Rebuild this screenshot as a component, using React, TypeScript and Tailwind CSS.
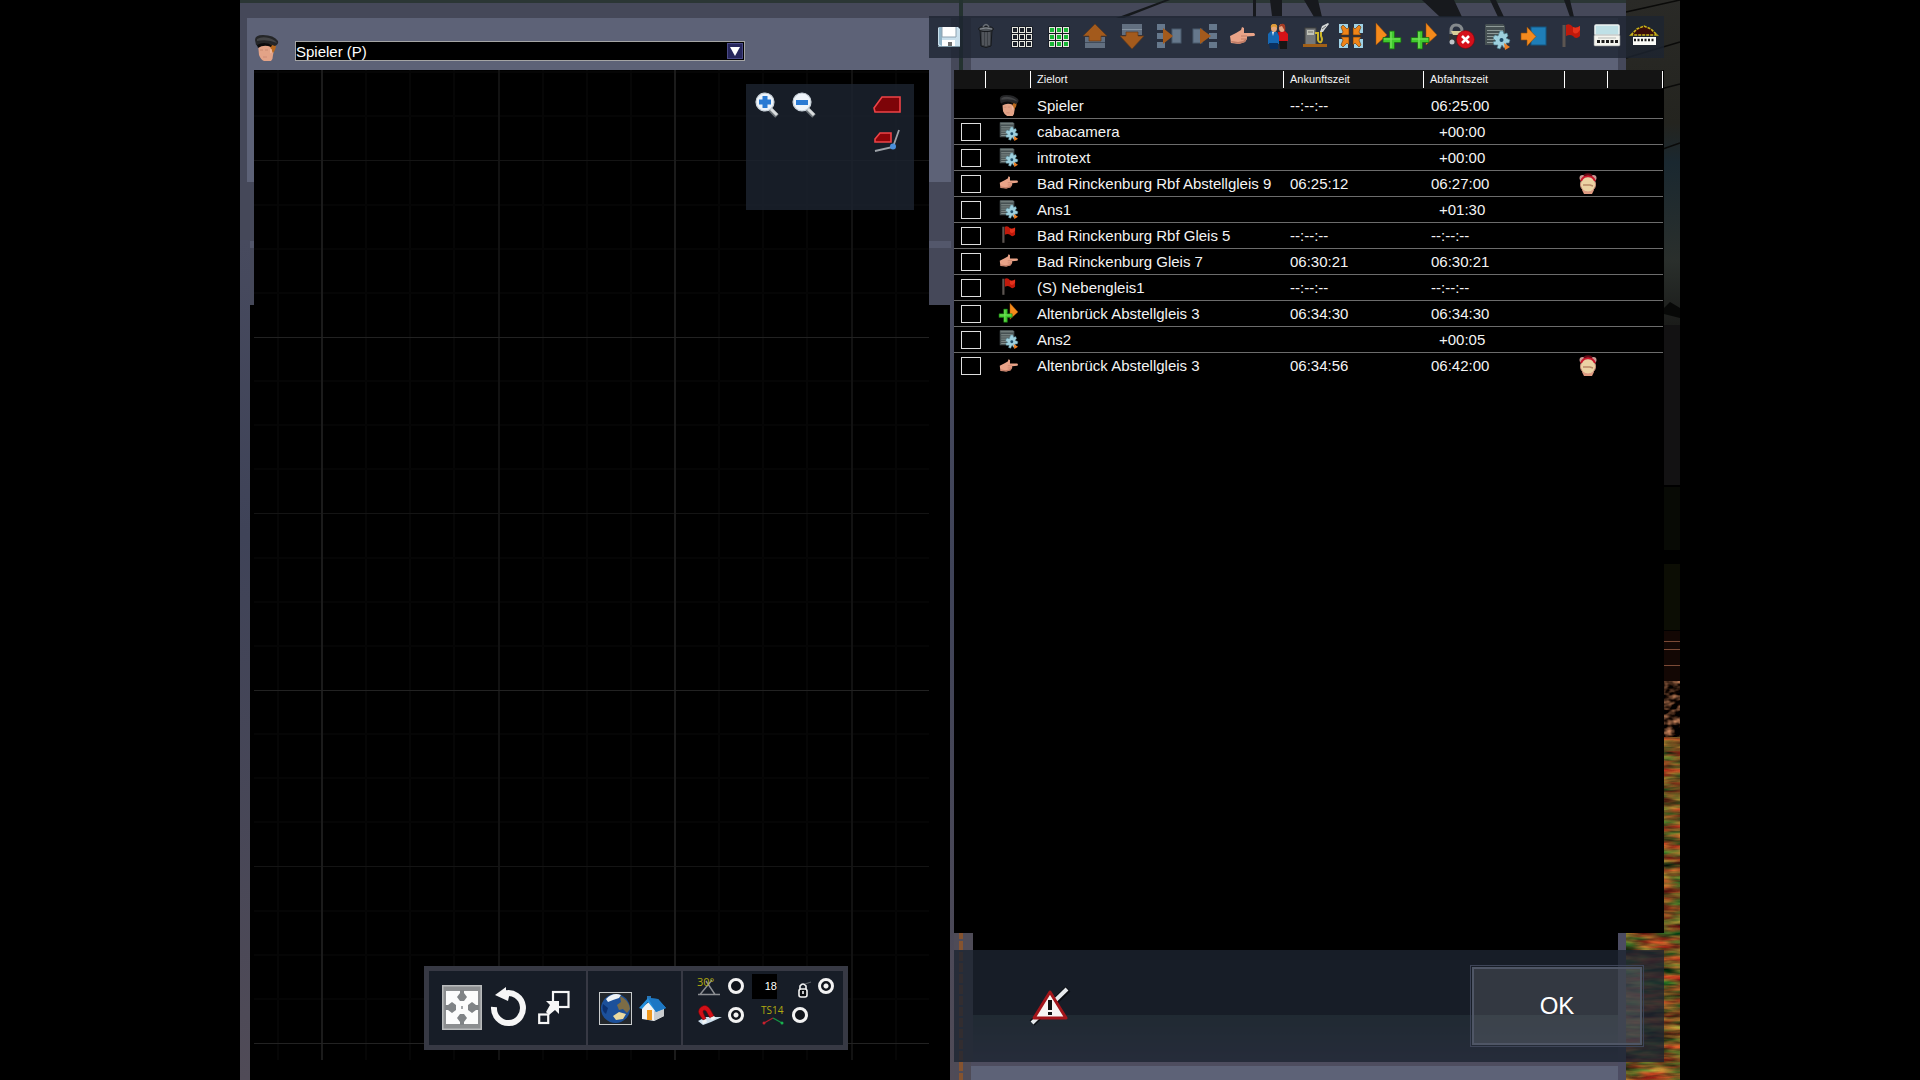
import type { ReactNode } from "react";

type IconProps = { className?: string };

function Svg({ className = "size-[26px]", children, box = "0 0 26 26" }: IconProps & { children: ReactNode; box?: string }) {
  return (
    <svg viewBox={box} className={`${className} block shrink-0 overflow-visible`} aria-hidden="true">
      {children}
    </svg>
  );
}

function DriverIcon({ className }: IconProps) {
  return (
    <Svg className={className}>
      <path d="M4 9 L5 20 Q7 25 10 26 L17 26 Q19 24 19 20 L21 10 Z" fill="#e3a387" />
      <path d="M15 9 L22 9 Q22 15 19 18 L17 14 Z" fill="#b9681c" />
      <path d="M16 14 Q18 13 18 16 Q18 19 16 18 Z" fill="#edb79d" />
      <path d="M6 15h3M11 15h3" stroke="#c98a70" />
      <path d="M9 22h4" stroke="#cf8a76" />
      <path d="M1 5 Q1 0 9 0 Q20 0 24 6 Q25 9 21 11 L18 10 Q10 7 4 11 L2 10 Z" fill="#252628" />
      <path d="M3 4 Q8 1 15 3 Q21 5 23 8 Q14 4 3 6 Z" fill="#434446" />
      <path d="M3 10 Q10 6 18 10 L17 12 Q10 9 4 13 Z" fill="#0b0b0c" />
    </Svg>
  );
}

function SaveIcon() {
  return (
    <Svg>
      <path d="M3 3H22L24 5V23H4L2 21V4Z" fill="#c9dfec" />
      <path d="M3 3H6V22L3 20Z" fill="#8fb2c6" />
      <rect x="6" y="3" width="14" height="10" fill="#fff" />
      <path d="M6 3V13H20V3" fill="none" stroke="#8ea2b0" />
      <rect x="6" y="16" width="13" height="7" fill="#fff" />
      <rect x="12" y="18" width="4" height="4" fill="#6e6e6e" />
      <path d="M2 22.500H24" stroke="#7d97a5" />
    </Svg>
  );
}

function TrashIcon() {
  return (
    <Svg>
      <path d="M7 6H19L18 22Q13 25 8 22Z" fill="#3b3f45" stroke="#15181c" />
      <path d="M10 8V21M13 8V22M16 8V21" stroke="#686d73" />
      <ellipse cx="13" cy="5" rx="7.500" ry="2.600" fill="#4c5157" stroke="#15181c" />
      <path d="M10 3Q13 -2 16 3" fill="none" stroke="#6a6f75" strokeWidth="1.500" />
      <path d="M7 5Q13 3 19 5" fill="none" stroke="#858a90" />
    </Svg>
  );
}

const gridSpots = [3, 10, 17];

function GridIcon({ fill }: { fill: string }) {
  return (
    <Svg>
      {gridSpots.map((y) =>
        gridSpots.map((x) => (
          <g key={`${x}-${y}`}>
            <rect x={x - 0.5} y={y - 0.5} width="7" height="7" fill="#0c0f14" />
            <rect x={x + 0.5} y={y + 0.5} width="5" height="5" fill={fill} stroke="#e8e8e0" />
          </g>
        )),
      )}
    </Svg>
  );
}

function MoveUpIcon() {
  return (
    <Svg>
      <rect x="3" y="13" width="20" height="11" fill="#626f80" />
      <path d="M3 18.500H23" stroke="#404b5a" />
      <path d="M13 0L25 12H19V17H7V12H1Z" fill="#a35a1c" stroke="#5f3a1c" strokeWidth=".7" />
    </Svg>
  );
}

function MoveDownIcon() {
  return (
    <Svg>
      <rect x="3" y="0" width="20" height="11" fill="#626f80" />
      <path d="M3 5.500H23" stroke="#8592a0" />
      <path d="M13 25L25 12H19V8H7V12H1Z" fill="#a35a1c" stroke="#5f3a1c" strokeWidth=".7" />
    </Svg>
  );
}

function CoupleIcon() {
  return (
    <Svg>
      <path d="M1 0H9V6H1ZM1 9H9V15H1ZM1 18H9V24H1Z" fill="#66788c" />
      <rect x="16" y="5" width="9" height="14" fill="#66788c" stroke="#4a5a6d" />
      <path d="M7 4L17 12L7 20Z" fill="#a35a1c" />
    </Svg>
  );
}

function UncoupleIcon() {
  return (
    <Svg>
      <rect x="1" y="5" width="9" height="14" fill="#66788c" stroke="#4a5a6d" />
      <path d="M17 0H25V6H17ZM17 9H25V15H17ZM17 18H25V24H17Z" fill="#66788c" />
      <path d="M8 4L19 12L8 20Z" fill="#a35a1c" />
    </Svg>
  );
}

function HandIcon({ className }: IconProps) {
  return (
    <Svg className={className}>
      <path d="M1 12L7 9L12 6L13 3L15 4L15 9L25 9Q27 11 25 12L18 12.500V15L16 18L10 20L2 19Z" fill="#e9a388" />
      <path d="M1 18L10 20L16 18L18 14L14 17L9 18L3 17Z" fill="#c07c66" />
      <path d="M12 12H18M12 15H17" stroke="#b87360" strokeWidth=".8" />
    </Svg>
  );
}

function PassengersIcon() {
  return (
    <Svg>
      <path d="M13 8L20 7L23 10V17H14Z" fill="#d51218" />
      <path d="M14 17H22V25H15Z" fill="#161616" />
      <ellipse cx="17" cy="4" rx="3" ry="4" fill="#e5a483" />
      <path d="M14 3Q15 -1 19 0Q21 2 20 7Q18 4 17 2Z" fill="#a33a22" />
      <path d="M3 10L6 7L12 8L14 12V20H3Z" fill="#1668b4" />
      <path d="M4 19H13V25H5Z" fill="#0b2f5d" />
      <path d="M7 8L8 12L9 8Z" fill="#e9eef5" />
      <ellipse cx="9" cy="4" rx="3" ry="4" fill="#e9a97b" />
      <path d="M6 4Q5 0 9 0Q13 0 12 4Q9 1 6 4Z" fill="#dc9a35" />
    </Svg>
  );
}

function FuelIcon() {
  return (
    <Svg>
      <rect x="3" y="4" width="11" height="17" fill="#75787a" stroke="#3e3e3c" />
      <rect x="5" y="6" width="7" height="5" fill="#c0c2b8" />
      <path d="M6 8H11" stroke="#6e6f68" />
      <rect x="1" y="20" width="24" height="3" fill="#a05f18" />
      <path d="M13 9H16V16Q17 19 19 18Q21 16 19 12L19 7" fill="none" stroke="#cdb528" strokeWidth="2" />
      <path d="M18 8L20 2L26 -1L27 0L23 5L21 8Z" fill="#d5d8d8" />
      <path d="M20 5L24 2" stroke="#6c6f70" />
    </Svg>
  );
}

function GatherIcon() {
  return (
    <Svg>
      <path d="M1 0H10V9H1ZM16 0H25V9H16ZM1 15H10V24H1ZM16 15H25V24H16Z" fill="#9fd2e6" />
      <g fill="#ef8418" stroke="#5c3208" strokeWidth=".6">
        <path d="M3 3L5 1L9 5L11 3V11H3L5 8Z" />
        <path d="M23 3L21 1L17 5L15 3V11H23L21 8Z" />
        <path d="M3 21L5 23L9 19L11 21V13H3L5 16Z" />
        <path d="M23 21L21 23L17 19L15 21V13H23L21 16Z" />
      </g>
    </Svg>
  );
}

function Plus({ x, y }: { x: number; y: number }) {
  return (
    <g transform={`translate(${x} ${y})`}>
      <path d="M-2.500 -9H2.500V-2.500H9V2.500H2.500V9H-2.500V2.500H-9V-2.500H-2.500Z" fill="#3fc92d" stroke="#1c6b14" strokeWidth=".8" />
      <path d="M-1 -8V8M-8 -1H8" stroke="#7be560" strokeWidth="1.200" />
    </g>
  );
}

function InsertAfterIcon() {
  return (
    <Svg>
      <path d="M1 -1L12 11L1 21Z" fill="#f58a1b" stroke="#9a4b06" strokeWidth=".5" />
      <Plus x={17} y={16} />
    </Svg>
  );
}

function InsertBeforeIcon({ className }: IconProps) {
  return (
    <Svg className={className}>
      <path d="M15 -1L26 11L15 21Z" fill="#f58a1b" stroke="#9a4b06" strokeWidth=".5" />
      <Plus x={9} y={16} />
    </Svg>
  );
}

function LockDeleteIcon() {
  return (
    <Svg>
      <path d="M3 10V7Q3 1 8 1Q14 1 14 7V10" fill="none" stroke="#84898c" strokeWidth="3" />
      <path d="M1 11H15V16Q14 20 9 20H5Q1 19 1 15Z" fill="#2f3236" />
      <path d="M3 7H14L12 11H5Z" fill="#d9cf9a" />
      <circle cx="4" cy="18" r="2.500" fill="#bfc4c8" />
      <circle cx="17.500" cy="15.500" r="9" fill="#d5101b" stroke="#7b060c" strokeWidth=".6" />
      <path d="M14 12L21 19M21 12L14 19" stroke="#fff" strokeWidth="2.600" />
    </Svg>
  );
}

function ScriptIcon({ className }: IconProps) {
  return (
    <Svg className={className}>
      <path d="M2 0H19L21 2V21H1V1Z" fill="#465052" />
      <path d="M2 2.500H20M3 6.500H19M3 9.500H17M3 12.500H13M3 15.500H11M3 18.500H11" stroke="#8e9a98" strokeWidth="1.200" />
      <path d="M16 7H19L20 10L23 9L24 12L22 14L26 16L25 19L22 19L23 22L20 24L18 21L16 25L13 24L14 21L10 21L9 18L12 17L9 14L11 11L14 12Z" fill="#9dd0de" stroke="#4e7d8d" strokeWidth=".6" />
      <circle cx="17.500" cy="16" r="2" fill="#1d4a66" />
      <path d="M20 19L26 23L21 26Z" fill="#ef7f22" />
    </Svg>
  );
}

function EnterIcon() {
  return (
    <Svg>
      <rect x="10" y="3" width="15" height="18" fill="#1f7eb8" stroke="#145682" />
      <path d="M0 9H6V3L15 12.500L6 22V16H0Z" fill="#f48a1e" stroke="#8c4a0b" strokeWidth=".6" />
    </Svg>
  );
}

function FlagIcon({ className }: IconProps) {
  return (
    <Svg className={className}>
      <path d="M6 1V23" stroke="#5c5551" strokeWidth="3" />
      <path d="M8 1Q12 -1 15 3Q18 5 22 2V12Q18 16 15 12Q12 10 8 12Z" fill="#c0190b" />
      <path d="M15 3Q18 5 22 2V6Q18 12 15 8Z" fill="#e5321c" />
    </Svg>
  );
}

function PlatformIcon() {
  return (
    <Svg>
      <rect x="1" y="1" width="24" height="10" rx="1" fill="#bfe0e6" stroke="#eef3f3" strokeWidth="1.500" />
      <rect x="0" y="11" width="26" height="11" rx="1" fill="#f4f4ee" stroke="#8b8e90" strokeWidth=".6" />
      <path d="M3 17.500H24" stroke="#1b1b1b" strokeWidth="3" strokeDasharray="3 1.500" />
      <path d="M4 14H22" stroke="#b6b9b6" />
    </Svg>
  );
}

function DepotIcon() {
  return (
    <Svg>
      <path d="M0 11L6 5L13 2L20 5L26 11Z" fill="#3a0d08" stroke="#c9b218" strokeWidth="1.600" strokeDasharray="3 1" />
      <rect x="2" y="13" width="23" height="8" fill="#fbfbf6" />
      <path d="M3 16H24" stroke="#1b1b1b" strokeWidth="2.500" strokeDasharray="2 1.500" />
    </Svg>
  );
}

function ClockIcon() {
  return (
    <Svg className="size-[20px]" box="0 0 20 20">
      <circle cx="4.500" cy="4" r="3" fill="#c99a94" />
      <circle cx="15.500" cy="4" r="3" fill="#c99a94" />
      <path d="M4 16L6 20H14L16 16Z" fill="#e09a80" />
      <circle cx="10" cy="10.500" r="7.500" fill="#ecd3a4" stroke="#d99a85" />
      <path d="M3 7Q5 2 10 2Q15 2 17 7" fill="none" stroke="#c8162a" strokeWidth="2" />
      <path d="M6 1.500Q10 -1 14 1.500" fill="none" stroke="#5f0814" strokeWidth="2" />
      <path d="M5 11H12L15 12" fill="none" stroke="#b88a68" strokeWidth="1.600" />
    </Svg>
  );
}

function MagnifierIcon({ minus = false }: { minus?: boolean }) {
  return (
    <Svg>
      <path d="M16 17L23 24" stroke="#6d7479" strokeWidth="5" />
      <path d="M17 17L23 23" stroke="#d9dcde" strokeWidth="3" />
      <circle cx="11" cy="10" r="9" fill="#eef4fa" stroke="#c9d2da" strokeWidth="1.200" />
      <path d={minus ? "M5 8H17V13H5Z" : "M8.500 4H13.500V7.500H17V12.500H13.500V16H8.500V12.500H5V7.500H8.500Z"} fill="#2a7ad3" />
    </Svg>
  );
}

function TrainIcon() {
  return (
    <Svg className="h-[17px] w-[28px]" box="0 0 28 17">
      <path d="M1 12L9 1H27V16H2Z" fill="#7d0408" stroke="#ee4347" strokeWidth="1.600" />
    </Svg>
  );
}

function TrainTrackIcon() {
  return (
    <Svg>
      <path d="M1 10L6 4H17V13H1Z" fill="#8d0408" stroke="#ee4347" strokeWidth="1.600" />
      <path d="M1 22L19 18L25 1" fill="none" stroke="#9da2a8" strokeWidth="1.800" />
      <circle cx="19" cy="17.500" r="3" fill="#4b8fdb" />
    </Svg>
  );
}

function MoveIcon() {
  return (
    <Svg className="h-[45px] w-[40px]" box="0 0 40 45">
      <rect x=".75" y=".75" width="38.500" height="43.500" fill="#8c8e90" stroke="#b9bbbc" strokeWidth="1.500" />
      <rect x="4" y="6" width="32" height="33" fill="#fcfcfc" />
      <path d="M18 5H22V8L25 12L22 16H18L15 12L18 8ZM18 40H22V37L25 33L22 29H18L15 33L18 37ZM3 20H6L10 17L14 20V25L10 28L6 25H3ZM37 20H34L30 17L26 20V25L30 28L34 25H37Z" fill="#808386" />
      <rect x="19" y="21" width="2" height="3" fill="#a5a7a9" />
    </Svg>
  );
}

function RotateIcon() {
  return (
    <Svg className="h-[40px] w-[35px]" box="0 0 35 40">
      <path d="M3 20A14.500 15 0 1 0 14 6.500" fill="none" stroke="#f6f6f6" strokeWidth="6" />
      <path d="M4 8L15 0V3.500L19 5L17 14Z" fill="#f6f6f6" />
    </Svg>
  );
}

function ScaleIcon() {
  return (
    <Svg className="h-[35px] w-[32px]" box="0 0 32 35">
      <rect x="15" y="2" width="15.500" height="15" fill="none" stroke="#f6f6f6" strokeWidth="2.200" />
      <rect x="1.200" y="24.500" width="9" height="8.500" fill="none" stroke="#f6f6f6" strokeWidth="2.200" />
      <path d="M8 11H21V24L17 20L11 25L8 22L12 15Z" fill="#f6f6f6" />
    </Svg>
  );
}

function GlobeIcon() {
  return (
    <Svg className="size-[33px]" box="0 0 33 33">
      <rect x=".5" y=".5" width="32" height="32" fill="#23272b" stroke="#c9cccd" />
      <circle cx="16.500" cy="16.500" r="14.500" fill="#1c509a" />
      <path d="M7 7Q14 0 22 3L20 6L14 8L9 10Z" fill="#eef3f6" />
      <path d="M21 4Q30 8 31 17L28 21L24 17L20 18L18 13L22 10Z" fill="#7c6c46" />
      <path d="M14 24L20 20L27 22L24 27L17 28Z" fill="#ead9a0" />
      <path d="M4 12L9 16L7 22Q2 19 4 12Z" fill="#0c3170" />
    </Svg>
  );
}

function HomeIcon() {
  return (
    <Svg className="h-[28px] w-[27px]" box="0 0 27 28">
      <path d="M3 13L13 6L25 14V22L15 27L3 25Z" fill="#f3f3f1" />
      <path d="M15 27V17L25 13V22Z" fill="#c9ccce" />
      <path d="M8 2H12V8H8Z" fill="#2a75b4" />
      <path d="M0 14L9 4L19 5L27 14L17 18L9 8L3 15Z" fill="#2590dd" />
      <path d="M9 4L19 5L27 14L17 18Z" fill="#1c77c4" />
      <rect x="8" y="16" width="5" height="10" fill="#f0981c" />
    </Svg>
  );
}

function AngleIcon() {
  return (
    <Svg className="h-[20px] w-[24px]" box="0 0 24 20">
      <path d="M3 18.500L15 4M9 5L18 18.500M1 18.500H23" fill="none" stroke="#8d8f93" strokeWidth="1.400" />
      <text x="0" y="10" fontSize="11" fill="#b1aa10" fontFamily="Open Sans, sans-serif">30°</text>
    </Svg>
  );
}

function MagnetIcon() {
  return (
    <Svg className="h-[22px] w-[26px]" box="0 0 26 22">
      <path d="M1 17L9 13L25 13L14 18L6 21Z" fill="#cfe0ee" />
      <path d="M4 13Q-1 7 4 3Q9 -1 13 5L17 12L13 14L9 7Q6 5 6 8L9 15L6 16Z" fill="#d20f17" stroke="#6f060a" strokeWidth=".6" />
      <path d="M5 17L9 15L10 18L6 20ZM13 14L17 12L19 14L15 16Z" fill="#f2f4f5" />
    </Svg>
  );
}

function PadlockIcon() {
  return (
    <Svg className="h-[20px] w-[14px]" box="0 0 14 20">
      <path d="M2 10V6Q5 2 8 6V10" fill="none" stroke="#f4f4f4" strokeWidth="1.600" />
      <path d="M7 4L13 2" stroke="#5f6469" strokeWidth="1.200" />
      <rect x="1" y="9" width="8" height="8" rx="2" fill="#090b0f" stroke="#f4f4f4" strokeWidth="1.600" />
      <path d="M5 11V14" stroke="#f4f4f4" strokeWidth="1.600" />
    </Svg>
  );
}

function TrackVersionIcon() {
  return (
    <Svg className="h-[20px] w-[24px]" box="0 0 24 20">
      <text x="0" y="9" fontSize="10" fill="#b1aa10" fontFamily="Open Sans, sans-serif">TS14</text>
      <path d="M3 18L12 13" stroke="#b3202c" strokeWidth="1.400" />
      <path d="M12 13L21 18" stroke="#159443" strokeWidth="1.400" />
      <circle cx="3" cy="18" r="1.500" fill="#c8202e" />
      <circle cx="21" cy="18" r="1.500" fill="#18b04e" />
    </Svg>
  );
}

function WarningIcon() {
  return (
    <Svg className="size-[40px]" box="0 0 40 40">
      <path d="M2 37L38 3" stroke="#0b0e13" strokeWidth="7" />
      <path d="M2 37L37 3" stroke="#e6e9ec" strokeWidth="4" />
      <path d="M20 6L36 32H4Z" fill="#f7f5f3" stroke="#a3151a" strokeWidth="3" strokeLinejoin="round" />
      <path d="M18 14H22V24H18ZM18 26H22V29H18Z" fill="#111" />
    </Svg>
  );
}

const tools: { label: string; icon: ReactNode }[] = [
  { label: "Speichern", icon: <SaveIcon /> },
  { label: "Löschen", icon: <TrashIcon /> },
  { label: "Auswahl aufheben", icon: <GridIcon fill="#1b2029" /> },
  { label: "Alles auswählen", icon: <GridIcon fill="#18b535" /> },
  { label: "Nach oben", icon: <MoveUpIcon /> },
  { label: "Nach unten", icon: <MoveDownIcon /> },
  { label: "Zusammenfassen", icon: <CoupleIcon /> },
  { label: "Trennen", icon: <UncoupleIcon /> },
  { label: "Anhalten", icon: <HandIcon /> },
  { label: "Fahrgäste", icon: <PassengersIcon /> },
  { label: "Tanken", icon: <FuelIcon /> },
  { label: "Sammeln", icon: <GatherIcon /> },
  { label: "Danach einfügen", icon: <InsertAfterIcon /> },
  { label: "Davor einfügen", icon: <InsertBeforeIcon /> },
  { label: "Abkuppeln", icon: <LockDeleteIcon /> },
  { label: "Anweisung", icon: <ScriptIcon /> },
  { label: "Ziel", icon: <EnterIcon /> },
  { label: "Wegpunkt", icon: <FlagIcon /> },
  { label: "Bahnsteig", icon: <PlatformIcon /> },
  { label: "Depot", icon: <DepotIcon /> },
];

type Kind = "driver" | "script" | "hand" | "flag" | "insert";
type Stop = { kind: Kind; name: string; arrival?: string; departure: string; timed?: boolean };

const stops: Stop[] = [
  { kind: "driver", name: "Spieler", arrival: "--:--:--", departure: "06:25:00" },
  { kind: "script", name: "cabacamera", departure: "+00:00" },
  { kind: "script", name: "introtext", departure: "+00:00" },
  { kind: "hand", name: "Bad Rinckenburg Rbf Abstellgleis 9", arrival: "06:25:12", departure: "06:27:00", timed: true },
  { kind: "script", name: "Ans1", departure: "+01:30" },
  { kind: "flag", name: "Bad Rinckenburg Rbf Gleis 5", arrival: "--:--:--", departure: "--:--:--" },
  { kind: "hand", name: "Bad Rinckenburg Gleis 7", arrival: "06:30:21", departure: "06:30:21" },
  { kind: "flag", name: "(S) Nebengleis1", arrival: "--:--:--", departure: "--:--:--" },
  { kind: "insert", name: "Altenbrück Abstellgleis 3", arrival: "06:34:30", departure: "06:34:30" },
  { kind: "script", name: "Ans2", departure: "+00:05" },
  { kind: "hand", name: "Altenbrück Abstellgleis 3", arrival: "06:34:56", departure: "06:42:00", timed: true },
];

const stopIcons: Record<Kind, ReactNode> = {
  driver: <DriverIcon className="size-[21px]" />,
  script: <ScriptIcon className="size-[19px]" />,
  hand: <HandIcon className="size-[19px]" />,
  flag: <FlagIcon className="size-[19px]" />,
  insert: <InsertBeforeIcon className="size-[19px]" />,
};

/* The cab wall and the landscape seen past its window. */
function Scenery() {
  return (
    <svg viewBox="0 0 1440 1080" preserveAspectRatio="none" className="absolute inset-0 size-full" aria-hidden="true">
      <defs>
        <filter id="grass" x="0" y="0" width="1" height="1" colorInterpolationFilters="sRGB">
          <feTurbulence type="fractalNoise" baseFrequency="0.03 0.16" numOctaves="3" seed="4" />
          <feColorMatrix values="1.3 0 0 0 -0.21  0.45 0.75 0 0 -0.29  0.2 0.2 0 0 -0.08  0 0 0 0 1" />
        </filter>
        <filter id="gravel" x="0" y="0" width="1" height="1" colorInterpolationFilters="sRGB">
          <feTurbulence type="fractalNoise" baseFrequency="0.12 0.2" numOctaves="2" seed="9" />
          <feColorMatrix values="1.6 0 0 0 -0.58  1.1 0 0 0 -0.42  0.8 0 0 0 -0.32  0 0 0 0 1" />
        </filter>
        <linearGradient id="sky" x2="0" y2="1">
          <stop offset="0" stopColor="#2a2a27" />
          <stop offset=".38" stopColor="#24241f" />
          <stop offset=".5" stopColor="#1a2830" />
          <stop offset=".8" stopColor="#2a2f2c" />
          <stop offset="1" stopColor="#1b1c1a" />
        </linearGradient>
        <linearGradient id="post" x2="0" y2="1">
          <stop offset="0" stopColor="#474a5e" />
          <stop offset=".35" stopColor="#3f4358" />
          <stop offset="1" stopColor="#504b57" />
        </linearGradient>
        <linearGradient id="ledge" x2="0" y2="1">
          <stop offset="0" stopColor="#30403b" />
          <stop offset="1" stopColor="#4c4c62" />
        </linearGradient>
      </defs>
      <rect width="1440" height="1080" fill="#000" />
      <rect x="1386" width="54" height="325" fill="url(#sky)" />
      <path d="M1386 12L1440 0M1386 58L1440 42M1386 98L1440 84M1420 150L1440 143" stroke="#0a0a09" strokeWidth="1.500" />
      <path d="M1424 308L1430 302L1440 308V318L1424 314Z" fill="#070807" />
      <rect x="1424" y="325" width="16" height="160" fill="#131213" />
      <rect x="1424" y="487" width="16" height="63" fill="#080a05" />
      <rect x="1424" y="564" width="16" height="66" fill="#0c0d04" />
      <rect x="1424" y="631" width="16" height="50" fill="#130704" />
      <path d="M1424 641.500H1440M1424 649.500H1440M1424 665.500H1440" stroke="#7b4a36" />
      <rect x="1424" y="681" width="16" height="56" filter="url(#gravel)" />
      <rect x="1386" y="737" width="54" height="343" filter="url(#grass)" />

      <rect width="718" height="308" fill="#454859" />
      <rect x="7" y="18" width="704" height="164" fill="#5d6277" />
      <rect x="7" y="241" width="704" height="7" fill="#53576b" />
      <rect x="10" y="305" width="700" height="775" fill="#000" />
      <rect y="240" width="10" height="840" fill="url(#post)" />
      <rect x="710" y="300" width="8" height="780" fill="url(#post)" />

      <rect x="711" width="675" height="72" fill="#454859" />
      <rect x="731" y="18" width="647" height="54" fill="#5d6277" />
      <rect width="1386" height="3" fill="#2b3635" />
      <rect x="719" width="4" height="72" fill="#243230" />
      <path d="M160 0H165M876 18L925 0H930L884 18Z" fill="#15181b" />
      <path d="M1013 0H1016V17H1013ZM1030 0H1042V16H1032ZM1064 0H1078L1082 17H1074ZM1182 0H1214L1222 17H1200ZM1250 0H1256L1264 17H1258ZM1324 0H1330L1334 17H1330Z" fill="#17191d" />

      <rect x="714" y="930" width="19" height="150" fill="#4e4b57" />
      <path d="M721 930V1080" stroke="#85532f" strokeWidth="4" strokeDasharray="9 2" />
      <rect x="733" y="930" width="645" height="85" fill="#000" />
      <rect x="733" y="1015" width="645" height="50" fill="url(#ledge)" />
      <rect x="731" y="1062" width="647" height="4" fill="#4e4d5f" />
      <rect x="731" y="1066" width="647" height="14" fill="#5d6277" />
      <rect x="1378" y="930" width="8" height="150" fill="#4c4c62" />
    </svg>
  );
}

const minorLines = [44, 88, 132, 221, 265, 309];

/* World grid: bright, medium and faint lines on a repeating tile. */
function MapGrid() {
  return (
    <svg className="absolute inset-0 size-full" aria-hidden="true">
      <defs>
        <pattern id="tile" x="67" y="266" width="353" height="353" patternUnits="userSpaceOnUse">
          {minorLines.map((p) => (
            <g key={p}>
              <rect x={p} width="2" height="353" fill="#060606" />
              <rect y={p} width="353" height="2" fill="#050505" />
            </g>
          ))}
          <rect x="177" width="2" height="353" fill="#121212" />
          <rect y="177" width="353" height="1" fill="#141414" />
          <rect width="2" height="353" fill="#1b1b1b" />
          <rect y="1" width="353" height="1" fill="#222222" />
        </pattern>
      </defs>
      <rect width="100%" height="100%" fill="#000" />
      <rect width="100%" height="100%" fill="url(#tile)" />
    </svg>
  );
}

function IconButton({ label, className = "", children }: { label: string; className?: string; children: ReactNode }) {
  return (
    <button type="button" aria-label={label} className={`flex items-center justify-center ${className}`}>
      {children}
    </button>
  );
}

function Toggle({ label, on = false }: { label: string; on?: boolean }) {
  return (
    <input
      type="checkbox"
      aria-label={label}
      defaultChecked={on}
      className="block size-[16px] shrink-0 appearance-none rounded-full border-[3px] border-[#f2f2f2] bg-[#10141b] checked:bg-[radial-gradient(circle,#f2f2f2_0_2px,#10141b_3px)]"
    />
  );
}

function EditorTools() {
  return (
    <div className="absolute bottom-[10px] left-[170px] flex h-[84px] border-[5px] border-[#373944] bg-[#171d27]">
      <div className="flex w-[159px] items-center gap-[9px] border-r-2 border-[#373944] pb-[2px] pl-[13px]">
        <IconButton label="Verschieben"><MoveIcon /></IconButton>
        <IconButton label="Drehen"><RotateIcon /></IconButton>
        <IconButton label="Skalieren" className="pl-[3px]"><ScaleIcon /></IconButton>
      </div>
      <div className="flex w-[95px] items-center gap-[7px] border-r-2 border-[#373944] pl-[11px]">
        <IconButton label="Welt"><GlobeIcon /></IconButton>
        <IconButton label="Startpunkt"><HomeIcon /></IconButton>
      </div>
      <div className="flex w-[160px] flex-col gap-[3px] pl-[14px] pt-[2px]">
        <div className="flex h-[26px] items-center">
          <AngleIcon />
          <div className="ml-[7px]"><Toggle label="Winkel einrasten" /></div>
          <input
            type="text"
            aria-label="Winkel"
            defaultValue="18"
            className="ml-[8px] h-[25px] w-[25px] bg-black p-0 text-right text-[11px] text-white"
          />
          <div className="ml-[21px] mt-2"><PadlockIcon /></div>
          <div className="ml-[6px]"><Toggle label="Sperren" on /></div>
        </div>
        <div className="flex h-[26px] items-center">
          <MagnetIcon />
          <div className="ml-[5px]"><Toggle label="Magnet" on /></div>
          <div className="ml-[17px]"><TrackVersionIcon /></div>
          <div className="ml-[7px]"><Toggle label="TS14" /></div>
        </div>
      </div>
    </div>
  );
}

function MapPane() {
  return (
    <section className="flex min-w-0 flex-col pb-[20px] pl-[14px]">
      <div className="flex h-[70px] items-end pb-[9px]">
        <DriverIcon />
        <div className="relative ml-[15px] w-2/3">
          <select
            aria-label="Fahrer"
            className="block h-[20px] w-full appearance-none border border-[#a5a5a5] bg-black pl-0 pr-5 text-[15px] leading-[17px] text-white"
          >
            <option>Spieler (P)</option>
          </select>
          <span className="pointer-events-none absolute right-[2px] top-[2px] flex size-[16px] items-center justify-center border border-[#4a4a86] bg-[#26265c]">
            <svg viewBox="0 0 10 9" className="h-[9px] w-[10px]" aria-hidden="true"><path d="M0 0H10L5 9Z" fill="#fff" /></svg>
          </span>
        </div>
      </div>
      <div className="relative flex-1">
        <MapGrid />
        <div className="absolute right-[15px] top-[14px] grid h-[126px] w-[168px] auto-rows-[37px] grid-cols-[37px_37px_1fr_54px] content-start bg-[#1d2431]/80 pt-[2px]">
          <IconButton label="Vergrößern" className="pl-[4px]"><MagnifierIcon /></IconButton>
          <IconButton label="Verkleinern" className="pl-[4px]"><MagnifierIcon minus /></IconButton>
          <IconButton label="Zug" className="col-start-4"><TrainIcon /></IconButton>
          <IconButton label="Zug auf Strecke" className="col-start-4"><TrainTrackIcon /></IconButton>
        </div>
        <EditorTools />
      </div>
    </section>
  );
}

const headings = ["", "", "Zielort", "Ankunftszeit", "Abfahrtszeit", "", ""];

function Timetable() {
  return (
    <table className="w-full table-fixed border-separate border-spacing-0 text-left text-[15px] leading-[18px] text-[#f4f4f4]">
      <colgroup>
        <col className="w-[32px]" />
        <col className="w-[45px]" />
        <col />
        <col className="w-[140px]" />
        <col className="w-[141px]" />
        <col className="w-[43px]" />
        <col className="w-[55px]" />
      </colgroup>
      <thead>
        <tr className="h-[19px] bg-[#141414] text-[11px]">
          {headings.map((h, i) => (
            <th key={i} scope="col" className="p-0 font-normal">
              <div className="h-[17px] border-r border-white pl-[6px] leading-[16px]">{h}</div>
            </th>
          ))}
        </tr>
      </thead>
      <tbody>
        {stops.map((s, i) => {
          const edge = i < stops.length - 1 ? "border-b border-[#6c6c6c]" : "";
          const top = i === 0 ? "pt-[4px]" : "";
          const cell = `p-0 ${edge} ${top}`;
          return (
            <tr key={i} className={i === 0 ? "h-[30px]" : "h-[26px]"}>
              <td className={`${cell} pl-[7px]`}>
                {i > 0 && (
                  <input
                    type="checkbox"
                    aria-label={`${s.name} auswählen`}
                    className="block h-[18px] w-[20px] appearance-none border border-[#dedede] bg-black checked:bg-white"
                  />
                )}
              </td>
              <td className={`${cell} pl-[13px]`}>{stopIcons[s.kind]}</td>
              <td className={`${cell} truncate pl-[6px]`}>{s.name}</td>
              <td className={`${cell} pl-[6px]`}>{s.arrival}</td>
              <td className={`${cell} ${s.departure.startsWith("+") ? "pl-[15px]" : "pl-[7px]"}`}>{s.departure}</td>
              <td className={`${cell} pl-[13px]`}>{s.timed && <ClockIcon />}</td>
              <td className={cell} />
            </tr>
          );
        })}
      </tbody>
    </table>
  );
}

function TimetablePane() {
  return (
    <section className="flex min-w-0 flex-col pb-[18px] pr-[16px] pt-[16px]">
      <div role="toolbar" aria-label="Fahrplan" className="flex h-[42px] items-center bg-[#1d2431]/80 px-[2px]">
        {tools.map((t) => (
          <IconButton key={t.label} label={t.label} className="min-w-0 flex-1">{t.icon}</IconButton>
        ))}
      </div>
      <div className="ml-[25px] mt-[12px] flex-1 bg-black pr-px">
        <Timetable />
      </div>
      <div className="ml-[25px] mt-[17px] flex h-[112px] items-center justify-between bg-[#1d2431]/80 pl-[76px] pr-[20px]">
        <IconButton label="Warnung"><WarningIcon /></IconButton>
        <button type="button" className="h-[82px] w-[174px] border border-[#3e4558] p-px">
          <span className="flex size-full items-center justify-center border-2 border-[#4f5666] bg-white/12 text-2xl text-white">OK</span>
        </button>
      </div>
    </section>
  );
}

export default function App() {
  return (
    <main className="flex min-h-screen justify-center bg-black font-['Liberation_Sans',Arial,sans-serif]">
      <div className="relative flex w-3/4">
        <Scenery />
        <div className="relative grid w-full grid-cols-[689fr_751fr]">
          <MapPane />
          <TimetablePane />
        </div>
      </div>
    </main>
  );
}
